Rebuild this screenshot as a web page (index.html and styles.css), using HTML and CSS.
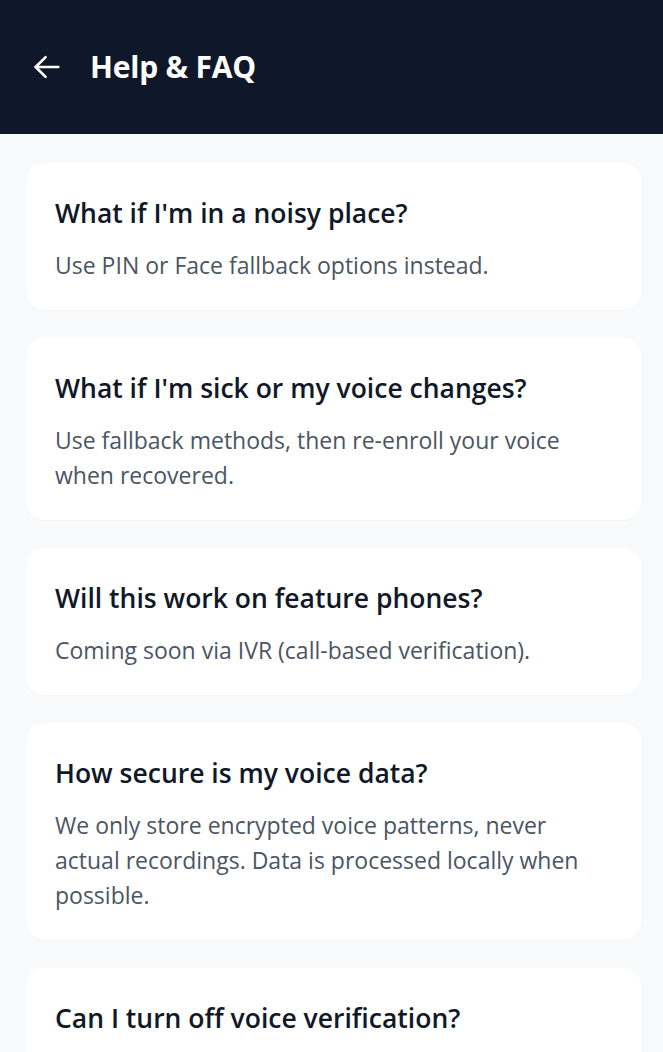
FILE: index.html
```html
<!DOCTYPE html>
<html lang="en">
<head>
<meta charset="utf-8">
<title>Help &amp; FAQ</title>
<link rel="stylesheet" href="styles.css">
</head>
<body>
<header class="topbar">
  <button class="back" aria-label="Back">
    <svg width="34" height="34" viewBox="0 0 24 24" fill="none" stroke="currentColor" stroke-width="1.8" stroke-linecap="round" stroke-linejoin="round"><path d="M20 12H4"/><path d="M11 19l-7-7 7-7"/></svg>
  </button>
  <h1 class="title">Help &amp; FAQ</h1>
</header>
<main class="faq">
  <section class="card">
    <h2 class="q">What if I'm in a noisy place?</h2>
    <p class="a">Use PIN or Face fallback options instead.</p>
  </section>
  <section class="card">
    <h2 class="q">What if I'm sick or my voice changes?</h2>
    <p class="a">Use fallback methods, then re-enroll your voice when recovered.</p>
  </section>
  <section class="card">
    <h2 class="q">Will this work on feature phones?</h2>
    <p class="a">Coming soon via IVR (call-based verification).</p>
  </section>
  <section class="card">
    <h2 class="q">How secure is my voice data?</h2>
    <p class="a">We only store encrypted voice patterns, never actual recordings. Data is processed locally when possible.</p>
  </section>
  <section class="card">
    <h2 class="q">Can I turn off voice verification?</h2>
    <p class="a">Yes, you can disable it anytime from Settings and use other verification methods.</p>
  </section>
</main>
</body>
</html>
```

FILE: styles.css
```css
* { box-sizing: border-box; }
html, body { margin: 0; padding: 0; }
body {
  background: #f8fafc;
  font-family: "Open Sans", "Noto Sans", sans-serif;
  color: #111827;
}
.topbar {
  height: 134px;
  background: #0f172a;
  display: flex;
  align-items: center;
  padding: 0 0 0 30px;
  gap: 26px;
}
.back {
  background: none;
  border: 0;
  padding: 0;
  color: #ffffff;
  display: flex;
  align-items: center;
  cursor: pointer;
}
.title {
  margin: 0;
  color: #ffffff;
  font-size: 30px;
  font-weight: 700;
  line-height: 40px;
  letter-spacing: -0.2px;
}
.faq {
  display: flex;
  flex-direction: column;
  gap: 28px;
  padding: 29px 22px 28px 26px;
}
.card {
  background: #ffffff;
  border-radius: 18px;
  padding: 33px 29px 27.5px;
  box-shadow: 0 1px 2px rgba(15, 23, 42, 0.03);
}
.q {
  margin: 0 0 17.5px;
  font-size: 26.5px;
  line-height: 34px;
  font-weight: 600;
  color: #111827;
}
.a {
  margin: 0;
  font-size: 23px;
  line-height: 35px;
  color: #4b5563;
}
```
